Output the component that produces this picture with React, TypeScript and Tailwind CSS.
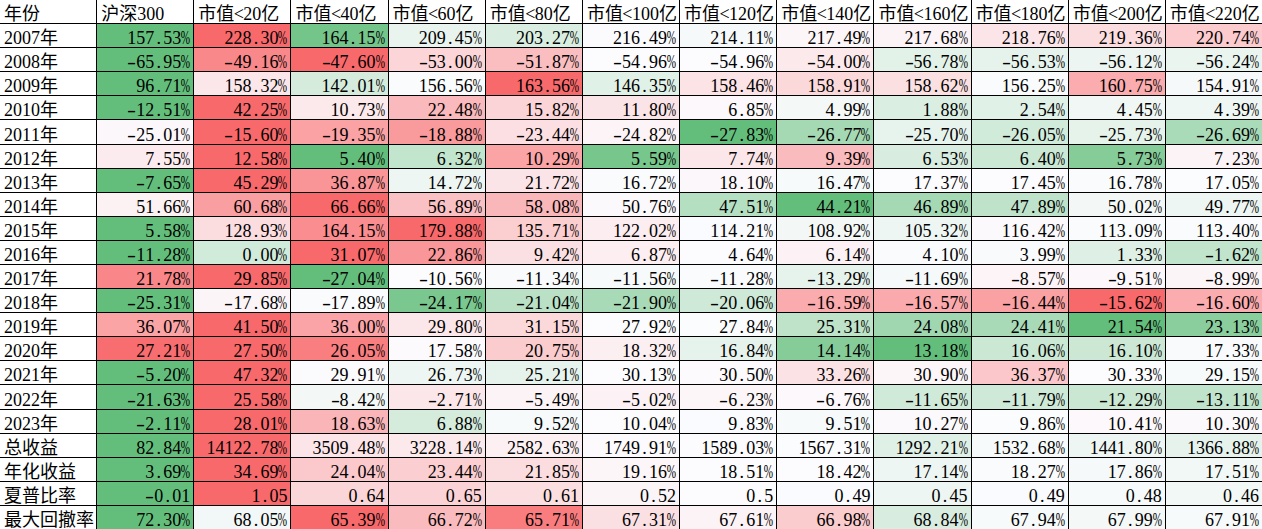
import React from "react";

const HEADERS = ["年份", "沪深300", "市值<20亿", "市值<40亿", "市值<60亿", "市值<80亿", "市值<100亿", "市值<120亿", "市值<140亿", "市值<160亿", "市值<180亿", "市值<200亿", "市值<220亿"];

const ROWS: [string, string[]][] = [
  ["2007年", ["157.53%", "228.30%", "164.15%", "209.45%", "203.27%", "216.49%", "214.11%", "217.49%", "217.68%", "218.76%", "219.36%", "220.74%"]],
  ["2008年", ["-65.95%", "-49.16%", "-47.60%", "-53.00%", "-51.87%", "-54.96%", "-54.96%", "-54.00%", "-56.78%", "-56.53%", "-56.12%", "-56.24%"]],
  ["2009年", ["96.71%", "158.32%", "142.01%", "156.56%", "163.56%", "146.35%", "158.46%", "158.91%", "158.62%", "156.25%", "160.75%", "154.91%"]],
  ["2010年", ["-12.51%", "42.25%", "10.73%", "22.48%", "15.82%", "11.80%", "6.85%", "4.99%", "1.88%", "2.54%", "4.45%", "4.39%"]],
  ["2011年", ["-25.01%", "-15.60%", "-19.35%", "-18.88%", "-23.44%", "-24.82%", "-27.83%", "-26.77%", "-25.70%", "-26.05%", "-25.73%", "-26.69%"]],
  ["2012年", ["7.55%", "12.58%", "5.40%", "6.32%", "10.29%", "5.59%", "7.74%", "9.39%", "6.53%", "6.40%", "5.73%", "7.23%"]],
  ["2013年", ["-7.65%", "45.29%", "36.87%", "14.72%", "21.72%", "16.72%", "18.10%", "16.47%", "17.37%", "17.45%", "16.78%", "17.05%"]],
  ["2014年", ["51.66%", "60.68%", "66.66%", "56.89%", "58.08%", "50.76%", "47.51%", "44.21%", "46.89%", "47.89%", "50.02%", "49.77%"]],
  ["2015年", ["5.58%", "128.93%", "164.15%", "179.88%", "135.71%", "122.02%", "114.21%", "108.92%", "105.32%", "116.42%", "113.09%", "113.40%"]],
  ["2016年", ["-11.28%", "0.00%", "31.07%", "22.86%", "9.42%", "6.87%", "4.64%", "6.14%", "4.10%", "3.99%", "1.33%", "-1.62%"]],
  ["2017年", ["21.78%", "29.85%", "-27.04%", "-10.56%", "-11.34%", "-11.56%", "-11.28%", "-13.29%", "-11.69%", "-8.57%", "-9.51%", "-8.99%"]],
  ["2018年", ["-25.31%", "-17.68%", "-17.89%", "-24.17%", "-21.04%", "-21.90%", "-20.06%", "-16.59%", "-16.57%", "-16.44%", "-15.62%", "-16.60%"]],
  ["2019年", ["36.07%", "41.50%", "36.00%", "29.80%", "31.15%", "27.92%", "27.84%", "25.31%", "24.08%", "24.41%", "21.54%", "23.13%"]],
  ["2020年", ["27.21%", "27.50%", "26.05%", "17.58%", "20.75%", "18.32%", "16.84%", "14.14%", "13.18%", "16.06%", "16.10%", "17.33%"]],
  ["2021年", ["-5.20%", "47.32%", "29.91%", "26.73%", "25.21%", "30.13%", "30.50%", "33.26%", "30.90%", "36.37%", "30.33%", "29.15%"]],
  ["2022年", ["-21.63%", "25.58%", "-8.42%", "-2.71%", "-5.49%", "-5.02%", "-6.23%", "-6.76%", "-11.65%", "-11.79%", "-12.29%", "-13.11%"]],
  ["2023年", ["-2.11%", "28.01%", "18.63%", "6.88%", "9.52%", "10.04%", "9.83%", "9.51%", "10.27%", "9.86%", "10.41%", "10.30%"]],
  ["总收益", ["82.84%", "14122.78%", "3509.48%", "3228.14%", "2582.63%", "1749.91%", "1589.03%", "1567.31%", "1292.21%", "1532.68%", "1441.80%", "1366.88%"]],
  ["年化收益", ["3.69%", "34.69%", "24.04%", "23.44%", "21.85%", "19.16%", "18.51%", "18.42%", "17.14%", "18.27%", "17.86%", "17.51%"]],
  ["夏普比率", ["-0.01", "1.05", "0.64", "0.65", "0.61", "0.52", "0.5", "0.49", "0.45", "0.49", "0.48", "0.46"]],
  ["最大回撤率", ["72.30%", "68.05%", "65.39%", "66.72%", "65.71%", "67.31%", "67.61%", "66.98%", "68.84%", "67.94%", "67.99%", "67.91%"]],
];

const MIN = [99, 190, 123];
const MID = [252, 252, 255];
const MAX = [248, 105, 107];

function mix(a: number[], b: number[], t: number) {
  const c = a.map((v, i) => Math.round(v + (b[i] - v) * t));
  return `rgb(${c[0]},${c[1]},${c[2]})`;
}

function scaleColor(v: number, vals: number[], reverse: boolean) {
  const arr = reverse ? vals.map((x) => -x) : vals;
  const x = reverse ? -v : v;
  const s = [...arr].sort((a, b) => a - b);
  const n = s.length;
  const pos = (n - 1) * 0.5;
  const lo = Math.floor(pos);
  const hi = Math.ceil(pos);
  const med = s[lo] + (s[hi] - s[lo]) * (pos - lo);
  const mn = s[0];
  const mx = s[n - 1];
  if (x <= med) {
    const t = med === mn ? 1 : (x - mn) / (med - mn);
    return mix(MIN, MID, t);
  }
  const t = mx === med ? 0 : (x - med) / (mx - med);
  return mix(MID, MAX, t);
}

function Txt({ s }: { s: string }) {
  return (
    <span className="leading-[18px] whitespace-nowrap">
      {Array.from(s).map((c, i) => {
        if (c.charCodeAt(0) >= 128) return <span key={i}>{c}</span>;
        if (c === "%")
          return (
            <span key={i} className="inline-flex w-[9px] justify-center [transform:scaleX(0.62)]">
              {c}
            </span>
          );
        if (c === "-")
          return (
            <span key={i} className="inline-flex w-[9px] justify-center [transform:scaleX(1.5)]">
              {c}
            </span>
          );
        return (
          <span key={i} className="inline-flex w-[9px] justify-center">
            {c}
          </span>
        );
      })}
    </span>
  );
}

export default function App() {
  return (
    <div className="w-[1262px] h-[529px] bg-white overflow-hidden">
      <div className="grid grid-cols-[repeat(13,minmax(0,1fr))] grid-rows-[repeat(22,minmax(0,1fr))] gap-px bg-black w-[1262px] h-[529px] text-[18px] text-black font-['Liberation_Serif','Noto_Sans_CJK_SC',serif]">
        {HEADERS.map((h, i) => (
          <div key={`h${i}`} className="bg-white flex items-end justify-start pl-[4px] overflow-hidden">
            <Txt s={h} />
          </div>
        ))}
        {ROWS.map(([label, vals], r) => {
          const nums = vals.map((v) => parseFloat(v));
          const reverse = label === "最大回撤率";
          return (
            <React.Fragment key={label}>
              <div className="bg-white flex items-end justify-start pl-[4px] overflow-hidden">
                <Txt s={label} />
              </div>
              {vals.map((v, c) => (
                <div
                  key={`${r}-${c}`}
                  className="flex items-end justify-end pr-[3px] overflow-hidden"
                  style={{ backgroundColor: scaleColor(nums[c], nums, reverse) }}
                >
                  <Txt s={v} />
                </div>
              ))}
            </React.Fragment>
          );
        })}
      </div>
    </div>
  );
}
